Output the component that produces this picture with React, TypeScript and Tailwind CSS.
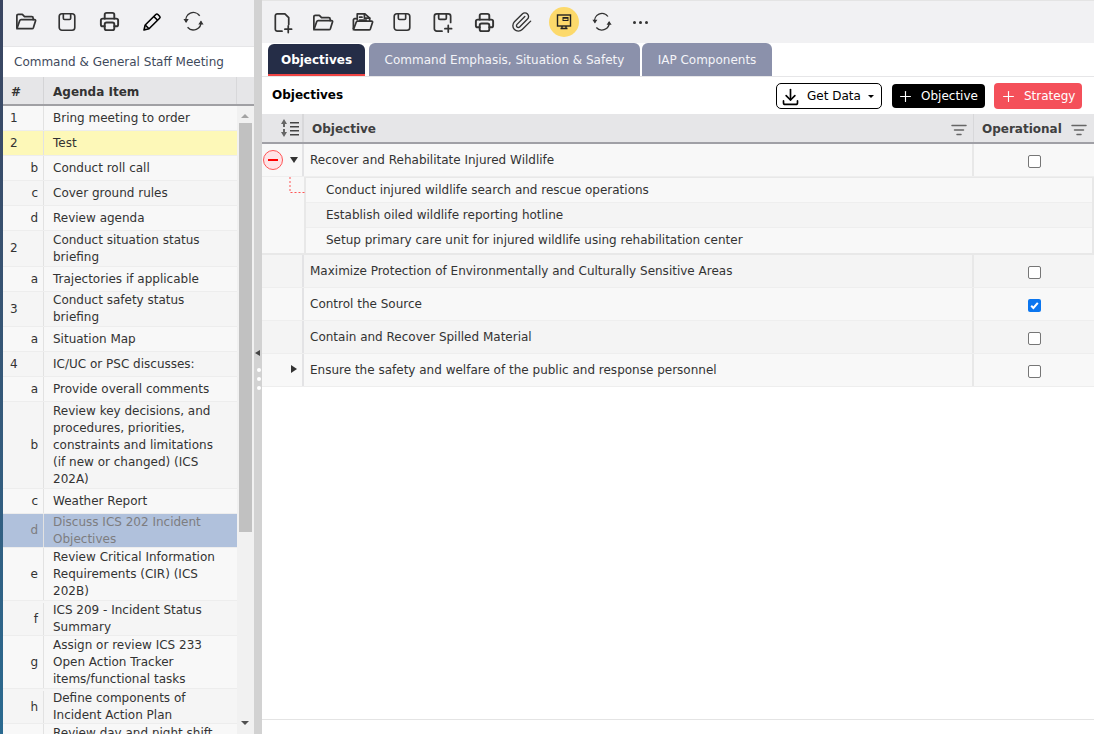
import React from "react";
import { TbPrinter, TbDownload, TbPlus } from "react-icons/tb";

const rows: { n: string; s: string; t: string; h: string; cls?: string }[] = [
  { n: "1", s: "", t: "Bring meeting to order", h: "h-[25px]" },
  { n: "2", s: "", t: "Test", h: "h-[25px]", cls: "y" },
  { n: "", s: "b", t: "Conduct roll call", h: "h-[25px]" },
  { n: "", s: "c", t: "Cover ground rules", h: "h-[25px]" },
  { n: "", s: "d", t: "Review agenda", h: "h-[25px]" },
  { n: "2", s: "", t: "Conduct situation status briefing", h: "h-[36px]" },
  { n: "", s: "a", t: "Trajectories if applicable", h: "h-[25px]" },
  { n: "3", s: "", t: "Conduct safety status briefing", h: "h-[35px]" },
  { n: "", s: "a", t: "Situation Map", h: "h-[25px]" },
  { n: "4", s: "", t: "IC/UC or PSC discusses:", h: "h-[25px]" },
  { n: "", s: "a", t: "Provide overall comments", h: "h-[25px]" },
  { n: "", s: "b", t: "Review key decisions, and procedures, priorities, constraints and limitations (if new or changed) (ICS 202A)", h: "h-[87px]" },
  { n: "", s: "c", t: "Weather Report", h: "h-[25px]" },
  { n: "", s: "d", t: "Discuss ICS 202 Incident Objectives", h: "h-[34px]", cls: "s" },
  { n: "", s: "e", t: "Review Critical Information Requirements (CIR) (ICS 202B)", h: "h-[53px]" },
  { n: "", s: "f", t: "ICS 209 - Incident Status Summary", h: "h-[35px] pt-[2px]" },
  { n: "", s: "g", t: "Assign or review ICS 233 Open Action Tracker items/functional tasks", h: "h-[53px]" },
  { n: "", s: "h", t: "Define components of Incident Action Plan", h: "h-[35px] pt-[2px]" },
  { n: "", s: "", t: "Review day and night shift briefing", h: "h-[36px]" },
];

function Ico({ size = 24, w = 1.8, children, className }: { size?: number; w?: number; children: React.ReactNode; className?: string }) {
  return (
    <svg width={size} height={size} viewBox="0 0 24 24" fill="none" stroke="currentColor" strokeWidth={w} strokeLinecap="round" strokeLinejoin="round" className={className}>
      {children}
    </svg>
  );
}

const FolderOpen = ({ size = 22 }: { size?: number }) => (
  <Ico size={size}>
    <path d="M3 18V6a1.5 1.5 0 0 1 1.5-1.5h4.2l2.3 2.5h7.5A1.5 1.5 0 0 1 20 8.500V10" />
    <path d="M3 19.500 6 11a1.500 1.500 0 0 1 1.400-1H21.500a1 1 0 0 1 1 1.300L20.200 18.500a1.500 1.500 0 0 1-1.400 1H4.500A1.500 1.500 0 0 1 3 18" />
  </Ico>
);
const Floppy = ({ size = 22 }: { size?: number }) => (
  <Ico size={size}>
    <rect x="3.500" y="3" width="17" height="18" rx="3" />
    <path d="M8 3v5a1.300 1.300 0 0 0 1.300 1.300h5.400A1.300 1.300 0 0 0 16 8V3" />
  </Ico>
);
const FloppyPlus = () => (
  <Ico size={23}>
    <path d="M11.500 21H6a2.500 2.500 0 0 1-2.500-2.500V5.500A2.500 2.500 0 0 1 6 3h12a2.500 2.500 0 0 1 2.500 2.500V12" />
    <path d="M8 3v4.500a1.300 1.300 0 0 0 1.300 1.300h5.400A1.300 1.300 0 0 0 16 7.500V3" />
    <path d="M14.500 18.500h7M18 15v7" />
  </Ico>
);
const FilePlus = () => (
  <Ico size={23}>
    <path d="M11.500 21H6.500A2 2 0 0 1 4.500 19V5a2 2 0 0 1 2-2h8l4 4v7" />
    <path d="M14.500 19h7M18 15.500v7" />
  </Ico>
);
const FolderFile = () => (
  <Ico size={23}>
    <path d="M2.500 18V9.500A1.500 1.500 0 0 1 4 8h1.500" />
    <path d="M6.500 9V3h8l5 4.500v2.500" />
    <path d="M14 3v4.500h5.500M9 6.500h2.500M9 9.500h7" />
    <path d="M2.500 19.500 5.500 11.500a1.500 1.500 0 0 1 1.400-1H21.500a1 1 0 0 1 1 1.300L20.200 18.800a1.500 1.500 0 0 1-1.400 1H4A1.500 1.500 0 0 1 2.500 18" />
  </Ico>
);
const Clip = () => (
  <Ico size={22} w={1.5}>
    <path d="m21.440 11.050-9.190 9.190a6 6 0 0 1-8.490-8.490l8.570-8.570A4 4 0 1 1 18 8.840l-8.590 8.570a2 2 0 0 1-2.830-2.830l8.490-8.480" />
  </Ico>
);
const Sync = ({ size = 24 }: { size?: number }) => (
  <svg width={size} height={size} viewBox="0 0 24 24" fill="none" stroke="currentColor" strokeWidth="1.400">
    <path d="M4.200 12.500A8 8 0 0 1 18.500 6" />
    <path d="M19.800 12A8 8 0 0 1 5.800 18" />
    <path d="M1.500 9.500h5.500l-2.700 4z M17 15h5.500l-2.700-4z" fill="currentColor" stroke="none" />
  </svg>
);
const Pencil = () => (
  <svg width="20" height="20" viewBox="0 0 20 20" fill="none" stroke="#000" strokeWidth="1.600" strokeLinejoin="round">
    <path d="M2 18l1.200-5L13.800 2.500a1.500 1.500 0 0 1 2.100 0l1.700 1.700a1.500 1.500 0 0 1 0 2.100L7 16.800z" />
    <path d="M11.800 4.500l3.800 3.800M3.200 13l3.800 3.800" />
  </svg>
);

function Filter() {
  return (
    <svg width="16" height="12" viewBox="0 0 16 12" className="text-[#666]">
      <path d="M1 1.500h14M3.500 6h9M6 10.500h4" stroke="currentColor" strokeWidth="1.500" strokeLinecap="round" />
    </svg>
  );
}

function Check({ on }: { on?: boolean }) {
  return on ? (
    <span className="flex h-[13px] w-[13px] items-center justify-center rounded-[2px] bg-[#0b76ef]">
      <svg width="11" height="11" viewBox="0 0 11 11"><path d="M2.200 5.800 4.400 8 8.800 2.800" fill="none" stroke="white" strokeWidth="2" /></svg>
    </span>
  ) : (
    <span className="block h-[13px] w-[13px] rounded-[2px] border border-[#767676] bg-white" />
  );
}

function ObjRow({ text, on, arrow, bg }: { text: string; on?: boolean; arrow?: boolean; bg: string }) {
  return (
    <div className={`flex h-[33px] border-b border-[#eeeeee] ${bg}`}>
      <div className="flex w-[42px] shrink-0 items-center justify-end border-r-2 border-[#e3e3e5] pb-[2px] pr-[4px]">
        {arrow && <span className="mr-[1px] h-0 w-0 border-y-[4px] border-l-[6px] border-y-transparent border-l-[#333]" />}
      </div>
      <div className="flex flex-1 items-center border-r-2 border-[#e8e8e8] pl-[6px]">{text}</div>
      <div className="flex w-[120px] shrink-0 items-center justify-center pt-[2px]"><Check on={on} /></div>
    </div>
  );
}

export default function App() {
  return (
    <div className="flex h-[734px] w-[1094px] overflow-hidden bg-white text-[12px] leading-[17px] text-[#333]" style={{ fontFamily: '"DejaVu Sans", sans-serif' }}>
      <div className="w-[3px] shrink-0 bg-gradient-to-b from-[#3a4560] to-[#2a6a90]" />
      <div className="flex h-full w-[251px] shrink-0 flex-col bg-white">
        <div className="flex h-[47px] shrink-0 items-center border-b border-[#e6e6e8] bg-[#f1f1f3] pb-[3px] pl-[1px] text-[#333]">
          <span className="flex w-[42px] justify-center"><FolderOpen size={23} /></span>
          <span className="flex w-[42px] justify-center"><Floppy size={22} /></span>
          <span className="flex w-[43px] justify-center"><TbPrinter size={23} strokeWidth={2} /></span>
          <span className="flex w-[42px] justify-center"><Pencil /></span>
          <span className="flex w-[41px] justify-center"><Sync size={23} /></span>
        </div>
        <div className="flex h-[30px] shrink-0 items-center pl-[11px] pt-[1px] text-[#3f4a5c]">Command &amp; General Staff Meeting</div>
        <div className="flex h-[29px] shrink-0 border-b-2 border-[#a0a0a4] bg-[#e6e6e8] font-bold text-[#333]">
          <div className="flex w-[41px] items-center border-r border-[#d4d4d6] pl-[8px] pt-[3px]">#</div>
          <div className="flex w-[193px] items-center border-r border-[#d8d8da] pl-[9px] pt-[3px]">Agenda Item</div>
        </div>
        <div className="relative flex min-h-0 flex-1">
          <div className="w-[234px] shrink-0 overflow-hidden">
            {rows.map((r, i) => {
              const bg = r.cls === "y" ? "bg-[#fdf8b8]" : r.cls === "s" ? "bg-[#b0c1dc] text-[#7d7d80]" : i % 2 ? "bg-[#f5f5f5]" : "bg-[#f8f8f8]";
              return (
                <div key={i} className={`flex border-b border-[#ededed] ${r.h} ${bg}`}>
                  <div className="relative flex w-[41px] shrink-0 items-center border-r border-[#e2e2e2] pl-[7px]">
                    {r.n}
                    {r.s && <span className="absolute right-[5px]">{r.s}</span>}
                  </div>
                  <div className="flex items-center pl-[9px] pr-[14px]"><span>{r.t}</span></div>
                </div>
              );
            })}
          </div>
          <div className="relative flex-1 bg-[#f1f1f1]">
            <div className="absolute left-[2px] top-[17px] h-[409px] w-[13px] bg-[#c1c1c1]" />
            <span className="absolute left-[4px] top-[8px] h-0 w-0 border-x-[4px] border-b-[4px] border-x-transparent border-b-[#a3a3a3]" />
            <span className="absolute bottom-[9px] left-[4px] h-0 w-0 border-x-[4px] border-t-[4px] border-x-transparent border-t-[#505050]" />
          </div>
        </div>
      </div>

      <div className="relative h-full w-[8px] shrink-0 bg-[#d2d2d2]">
        <span className="absolute left-[1px] top-[350px] h-0 w-0 border-y-[3px] border-r-[5px] border-y-transparent border-r-[#444]" />
        <span className="absolute left-[3px] top-[368px] h-[4px] w-[4px] rounded-full bg-white" />
        <span className="absolute left-[3px] top-[377px] h-[4px] w-[4px] rounded-full bg-white" />
        <span className="absolute left-[3px] top-[386px] h-[4px] w-[4px] rounded-full bg-white" />
      </div>

      <div className="flex h-full min-w-0 flex-1 flex-col">
        <div className="flex h-[43px] shrink-0 items-center border-t border-[#e4e4e4] bg-[#f1f1f3] text-[#333]">
          <span className="flex w-[40px] justify-center"><FilePlus /></span>
          <span className="flex w-[40px] justify-center"><FolderOpen size={23} /></span>
          <span className="flex w-[40px] justify-center"><FolderFile /></span>
          <span className="flex w-[40px] justify-center"><Floppy size={22} /></span>
          <span className="flex w-[40px] justify-center"><FloppyPlus /></span>
          <span className="ml-[2px] flex w-[40px] justify-center"><TbPrinter size={23} strokeWidth={2} /></span>
          <span className="-ml-[2px] flex w-[40px] justify-center"><Clip /></span>
          <span className="ml-[2px] flex w-[40px] justify-center">
            <span className="flex h-[30px] w-[30px] items-center justify-center rounded-full bg-[#fcd96b]">
              <svg width="16" height="16" viewBox="0 0 16 16" fill="none" stroke="#222" strokeWidth="1.400"><rect x="1.500" y="1" width="13" height="11" /><rect x="7" y="3.500" width="5" height="3" strokeWidth="1" /><path d="M7 4h5" strokeWidth="1.500" /><path d="M4.500 14.500h7M6 12v2.500M10 12v2.500" /></svg>
            </span>
          </span>
          <span className="-ml-[2px] flex w-[40px] justify-center"><Sync size={22} /></span>
          <span className="-ml-[2px] flex w-[40px] items-center justify-center gap-[3px]">
            <span className="h-[3px] w-[3px] rounded-full bg-[#333]" />
            <span className="h-[3px] w-[3px] rounded-full bg-[#333]" />
            <span className="h-[3px] w-[3px] rounded-full bg-[#333]" />
          </span>
        </div>
        <div className="flex h-[34px] shrink-0 items-end gap-[4px] border-b border-[#e6e6e8] pl-[6px] font-bold">
          <div className="flex h-[32px] w-[97px] items-center justify-center rounded-t-[6px] border-b-2 border-[#ef4444] bg-[#252d47] pt-[2px] text-white">Objectives</div>
          <div className="flex h-[33px] w-[271px] items-center justify-center rounded-t-[6px] bg-[#8b91ab] pt-[1px] font-normal text-[#f4f4f8]">Command Emphasis, Situation &amp; Safety</div>
          <div className="-ml-[2px] flex h-[33px] w-[130px] items-center justify-center rounded-t-[6px] bg-[#8b91ab] pt-[1px] font-normal text-[#f4f4f8]">IAP Components</div>
        </div>
        <div className="flex h-[37px] shrink-0 items-center pl-[10px] pr-[12px]">
          <span className="font-bold text-black">Objectives</span>
          <div className="ml-auto flex items-center pt-[1px]">
            <button className="flex h-[26px] w-[106px] items-center rounded-[5px] border border-black bg-white pl-[3px] text-black">
              <TbDownload size={21} strokeWidth={1.9} /><span className="ml-[6px]">Get Data</span>
              <span className="ml-[7px] h-0 w-0 border-x-[3px] border-t-[3px] border-x-transparent border-t-black" />
            </button>
            <button className="ml-[10px] flex h-[24px] w-[93px] items-center rounded-[4px] bg-black pl-[5px] text-white">
              <TbPlus size={17} strokeWidth={1.6} /><span className="ml-[7px]">Objective</span>
            </button>
            <button className="ml-[9px] flex h-[26px] w-[88px] items-center rounded-[4px] bg-[#f4505a] pl-[6px] text-white">
              <TbPlus size={17} strokeWidth={1.6} /><span className="ml-[7px]">Strategy</span>
            </button>
          </div>
        </div>
        <div className="flex h-[30px] shrink-0 border-b-2 border-[#a0a0a6] bg-[#e6e6e8] font-bold text-[#404040]">
          <div className="flex w-[42px] items-center justify-end border-r-2 border-[#d8d8da] pr-[3px]">
            <svg width="18" height="20" viewBox="0 0 18 20" fill="#666"><path d="M3 1 6 6H4v3H2V6H0zM3 19 0 14h2v-3h2v3h2z" /><path d="M9 4h9v1.400H9zM9 8h9v1.400H9zM9 12h9v1.400H9zM9 16h9v1.400H9z" fill="#444" /></svg>
          </div>
          <div className="flex flex-1 items-center justify-between border-r border-[#d8d8da] pl-[8px] pr-[6px] pt-[3px]">Objective<Filter /></div>
          <div className="flex w-[120px] items-center justify-between pl-[8px] pr-[7px] pt-[3px]">Operational<Filter /></div>
        </div>
        <div className="flex h-[33px] shrink-0 border-b border-[#eeeeee] bg-[#f8f8f8]">
          <div className="relative flex w-[42px] shrink-0 items-center border-r-2 border-[#e3e3e5]">
            <span className="ml-[1px] flex h-[20px] w-[20px] items-center justify-center rounded-full border border-[#f55] bg-[#ffe3e6]">
              <span className="h-[2px] w-[10px] bg-[#f00]" />
            </span>
            <span className="ml-[7px] h-0 w-0 border-x-[4px] border-t-[6px] border-x-transparent border-t-[#333]" />
          </div>
          <div className="flex flex-1 items-center border-r-2 border-[#e8e8e8] pl-[6px]">Recover and Rehabilitate Injured Wildlife</div>
          <div className="flex w-[120px] shrink-0 items-center justify-center pt-[2px]"><Check /></div>
        </div>
        <div className="flex h-[78px] shrink-0 border-b-2 border-[#e8e8e8] bg-[#f8f8f8]">
          <div className="relative w-[42px] shrink-0">
            <svg width="16" height="17" viewBox="0 0 16 17" className="absolute left-[27px] top-0">
              <path d="M1 0v15.500h15" fill="none" stroke="#f55" strokeWidth="1" strokeDasharray="2 2" />
            </svg>
          </div>
          <div className="flex-1 border-x-2 border-t border-[#e8e8e8]">
            <div className="flex h-[25px] items-center border-b border-[#eeeeee] pl-[20px]">Conduct injured wildlife search and rescue operations</div>
            <div className="flex h-[25px] items-center border-b border-[#eeeeee] bg-[#f4f4f4] pl-[20px]">Establish oiled wildlife reporting hotline</div>
            <div className="flex h-[25px] items-center pl-[20px]">Setup primary care unit for injured wildlife using rehabilitation center</div>
          </div>
        </div>
        <ObjRow bg="bg-[#f4f4f4]" text="Maximize Protection of Environmentally and Culturally Sensitive Areas" />
        <ObjRow bg="bg-[#f8f8f8]" text="Control the Source" on />
        <ObjRow bg="bg-[#f4f4f4]" text="Contain and Recover Spilled Material" />
        <ObjRow bg="bg-[#f8f8f8]" text="Ensure the safety and welfare of the public and response personnel" arrow />
        <div className="flex-1 border-b border-[#e4e4e4]" />
        <div className="h-[14px] shrink-0" />
      </div>
    </div>
  );
}
